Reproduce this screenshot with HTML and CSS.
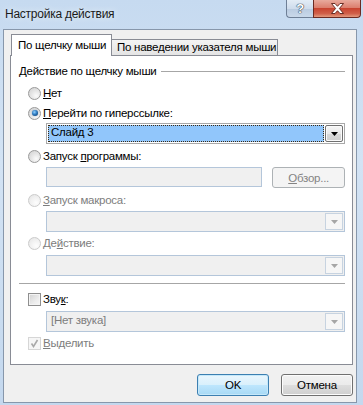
FILE: index.html
```html
<!DOCTYPE html>
<html lang="ru">
<head>
    <meta charset="UTF-8">
    <title>Настройка действия</title>
    <link rel="stylesheet" href="styles.css">
</head>
<body>
    <div class="window">
        <div class="titlebar">
            <span class="title">Настройка действия</span>
            <div class="caption-buttons">
                <span class="cap-btn help">?</span>
                <span class="cap-btn close">
                    <svg width="13" height="11" viewBox="0 0 13 11">
                        <polygon points="0.5,0.5 4,0.5 6.5,3.3 9,0.5 12.5,0.5 8.4,5.5 12.5,10.5 9,10.5 6.5,7.7 4,10.5 0.5,10.5 4.6,5.5" fill="#fff" stroke="#5a1f17" stroke-width="0.9"/>
                    </svg>
                </span>
            </div>
        </div>

        <div class="client">
            <div class="tabstrip">
                <div class="tab active">По щелчку мыши</div>
                <div class="tab">По наведении указателя мыши</div>
            </div>

            <div class="panel">
                <div class="legend">
                    <span>Действие по щелчку мыши</span>
                    <span class="rule"></span>
                </div>

                <div class="option opt-none">
                    <span class="radio"></span>
                    <span><u>Н</u>ет</span>
                </div>
                <div class="option opt-link">
                    <span class="radio checked"></span>
                    <span><u>П</u>ерейти по гиперссылке:</span>
                </div>
                <div class="combo selected indent">
                    <span class="field">Слайд 3</span>
                    <span class="drop">
                        <svg width="7" height="4" viewBox="0 0 7 4"><polygon points="0,0 7,0 3.5,4" fill="#000"/></svg>
                    </span>
                </div>

                <div class="option opt-program">
                    <span class="radio"></span>
                    <span>Запуск <u>п</u>рограммы:</span>
                </div>
                <div class="program-row indent">
                    <span class="textbox"></span>
                    <span class="button disabled"><u>О</u>бзор...</span>
                </div>

                <div class="option disabled opt-macro">
                    <span class="radio"></span>
                    <span><u>З</u>апуск макроса:</span>
                </div>
                <div class="combo indent combo-macro">
                    <span class="field"></span>
                    <span class="drop">
                        <svg width="7" height="4" viewBox="0 0 7 4"><polygon points="0,0 7,0 3.5,4" fill="#a6a6a6"/></svg>
                    </span>
                </div>

                <div class="option disabled opt-action">
                    <span class="radio"></span>
                    <span>Де<u>й</u>ствие:</span>
                </div>
                <div class="combo indent combo-action">
                    <span class="field"></span>
                    <span class="drop">
                        <svg width="7" height="4" viewBox="0 0 7 4"><polygon points="0,0 7,0 3.5,4" fill="#a6a6a6"/></svg>
                    </span>
                </div>

                <div class="separator"></div>

                <div class="option opt-sound">
                    <span class="checkbox"></span>
                    <span>Зву<u>к</u>:</span>
                </div>
                <div class="combo indent combo-sound">
                    <span class="field">[Нет звука]</span>
                    <span class="drop">
                        <svg width="7" height="4" viewBox="0 0 7 4"><polygon points="0,0 7,0 3.5,4" fill="#a6a6a6"/></svg>
                    </span>
                </div>

                <div class="option disabled opt-highlight">
                    <span class="checkbox checked">
                        <svg width="9" height="9" viewBox="0 0 9 9"><path d="M1.5 4.5 L3.5 7.5 L7.5 1" fill="none" stroke="#a9a9a9" stroke-width="1.6"/></svg>
                    </span>
                    <span><u>В</u>ыделить</span>
                </div>
            </div>

            <div class="dialog-buttons">
                <span class="button default">OK</span>
                <span class="button">Отмена</span>
            </div>
        </div>
    </div>
</body>
</html>
```

FILE: styles.css
```css
body {
    margin: 0;
    font-family: 'Liberation Sans', Arial, sans-serif;
    font-size: 11.5px;
    letter-spacing: -0.25px;
    color: #000;
    background: #c8dcf1;
}
.window {
    width: 363px;
    height: 405px;
    overflow: hidden;
    background: linear-gradient(to bottom, #c6daf0 0%, #d3e3f4 40%, #c4d8ee 100%);
}

/* Title bar */
.titlebar {
    height: 29px;
    display: flex;
    justify-content: space-between;
    align-items: flex-start;
}
.title {
    margin: 7px 0 0 5px;
    line-height: 14px;
    font-size: 12px;
    color: #1b1b1b;
    text-shadow: 0 0 6px #eef5fc;
}
.caption-buttons {
    display: flex;
    margin-right: 2px;
}
.cap-btn {
    height: 18px;
    box-sizing: border-box;
    display: flex;
    align-items: center;
    justify-content: center;
    border: 1px solid #6e7f96;
    border-top: none;
}
.help {
    width: 27px;
    border-radius: 0 0 0 4px;
    border-right: none;
    background: linear-gradient(to bottom, #e3ecf6 0%, #cfdcec 50%, #b9cbe0 51%, #c9d8ea 100%);
    color: #fff;
    font-weight: bold;
    font-size: 13px;
    text-shadow: 0 0 1px #2d3b4f, 0 0 1px #2d3b4f, 0 0 1px #2d3b4f;
}
.close {
    width: 48px;
    border-color: #6b2a22;
    border-radius: 0 0 4px 0;
    background: linear-gradient(to bottom, #e8aa9d 0%, #dc7f6e 45%, #c84430 50%, #d0604a 80%, #e39a7e 100%);
}

/* Client area */
.client {
    margin-left: 3px;
    width: 354px;
    height: 374px;
    box-sizing: border-box;
    border: 1px solid #8797ab;
    background: #f0f0f0;
    padding: 4px 3px 0 6px;
    display: flex;
    flex-direction: column;
}

/* Tabs */
.tabstrip {
    height: 21px;
    display: flex;
    align-items: flex-end;
    padding-left: 1px;
    position: relative;
    z-index: 1;
}
.tab {
    box-sizing: border-box;
    border: 1px solid #898c95;
    border-bottom: none;
    line-height: 14px;
    white-space: nowrap;
}
.tab.active {
    width: 101px;
    height: 22px;
    margin-bottom: -1px;
    padding: 3px 0 0 6px;
    background: #fff;
    position: relative;
    z-index: 2;
}
.tab:not(.active) {
    width: 167px;
    height: 16px;
    margin-left: -1px;
    padding: 0 0 0 5px;
    background: linear-gradient(to bottom, #f4f4f4, #e4e4e4);
}

.panel {
    height: 310px;
    box-sizing: border-box;
    border: 1px solid #898c95;
    background: #fff;
    padding: 8px 7px 0 8px;
}
.legend {
    height: 14px;
    line-height: 14px;
    display: flex;
    align-items: center;
    gap: 4px;
}
.rule {
    flex: 1;
    height: 1px;
    background: #a6a6a6;
}
.separator {
    height: 1px;
    margin-top: 7px;
    background: #a6a6a6;
}

/* Radio and check options */
.option {
    height: 14px;
    line-height: 14px;
    display: flex;
    align-items: center;
    gap: 2px;
    margin-left: 9px;
}
.option.disabled {
    color: #7d7d7d;
}
.radio {
    width: 13px;
    height: 13px;
    box-sizing: border-box;
    border-radius: 50%;
    border: 1px solid #9a9a9a;
    background: radial-gradient(circle at 65% 70%, #fbfbfb 0%, #e6e6e6 45%, #cfcfcf 100%);
    display: flex;
    align-items: center;
    justify-content: center;
}
.radio.checked::after {
    content: "";
    width: 6px;
    height: 6px;
    border-radius: 50%;
    background: radial-gradient(circle at 40% 35%, #8fd0ff 0%, #2d7ac0 45%, #0c2f59 100%);
    box-shadow: 0 0 1px #2a5a90;
}
.disabled .radio {
    border-color: #cbcbcb;
    background: radial-gradient(circle at 65% 70%, #fdfdfd 0%, #f1f1f1 50%, #e2e2e2 100%);
}
.checkbox {
    width: 13px;
    height: 13px;
    box-sizing: border-box;
    border: 1px solid #8f8f8f;
    background: linear-gradient(135deg, #d2d2d2 0%, #ececec 60%, #f7f7f7 100%);
    box-shadow: inset 0 0 0 1px #f4f4f4;
    display: flex;
    align-items: center;
    justify-content: center;
}
.checkbox.checked {
    border-color: #d6d6d6;
    background: #f6f6f6;
    box-shadow: none;
}

.indent {
    margin-left: 27px;
}
.opt-none { margin-top: 8px; }
.opt-link { margin-top: 6px; }
.selected { margin-top: 3px; }
.opt-program { margin-top: 5px; }
.program-row { margin-top: 4px; }
.opt-macro { margin-top: 5px; }
.combo-macro { margin-top: 4px; }
.opt-action { margin-top: 4px; }
.combo-action { margin-top: 5px; }
.opt-sound { margin-top: 8px; }
.combo-sound { margin-top: 5px; height: 20px; }
.opt-highlight { margin-top: 4px; }

/* Combo boxes */
.combo {
    height: 21px;
    box-sizing: border-box;
    display: flex;
    border: 1px solid #b4c6da;
    background: #f0f0f0;
    padding: 1px;
}
.combo .field {
    flex: 1;
    line-height: 15px;
    padding-left: 3px;
    color: #7d7d7d;
}
.combo .drop {
    width: 18px;
    box-sizing: border-box;
    margin-left: 1px;
    border: 1px solid #c7d3e0;
    background: #f6f6f6;
    display: flex;
    align-items: center;
    justify-content: center;
}
.combo.selected {
    border-color: #a8a8a8;
    background: #fff;
}
.combo.selected .field {
    background: #91c6fb;
    border: 1px dotted #3b2a12;
    line-height: 13px;
    padding-left: 2px;
    color: #000;
}
.combo.selected .drop {
    border: 1px solid #707070;
    border-radius: 2px;
    background: linear-gradient(to bottom, #f6f6f6 0%, #e9e9e9 50%, #d9d9d9 51%, #cfcfcf 100%);
    box-shadow: inset 0 0 0 1px #fafafa;
}

.program-row {
    display: flex;
    align-items: flex-start;
    gap: 10px;
}
.textbox {
    width: 217px;
    height: 20px;
    box-sizing: border-box;
    border: 1px solid #b4c6da;
    background: #f0f0f0;
}

/* Push buttons */
.button {
    width: 72px;
    height: 22px;
    box-sizing: border-box;
    border: 1px solid #707070;
    border-radius: 3px;
    display: flex;
    align-items: center;
    justify-content: center;
    background: linear-gradient(to bottom, #f2f2f2 0%, #ebebeb 50%, #dddddd 51%, #cfcfcf 100%);
    box-shadow: inset 0 0 0 1px #fcfcfc;
}
.button.disabled {
    width: 73px;
    height: 21px;
    border-color: #adb2b5;
    background: #f4f4f4;
    color: #838383;
    box-shadow: none;
}
.button.default {
    border-color: #3c7fb1;
    background: linear-gradient(to bottom, #eaf6fd 0%, #d9f0fc 50%, #bee6fd 51%, #a7d9f5 100%);
    box-shadow: inset 0 0 0 1px #c5e8fa;
}
.dialog-buttons {
    display: flex;
    justify-content: flex-end;
    gap: 12px;
    margin-top: 9px;
}
```
